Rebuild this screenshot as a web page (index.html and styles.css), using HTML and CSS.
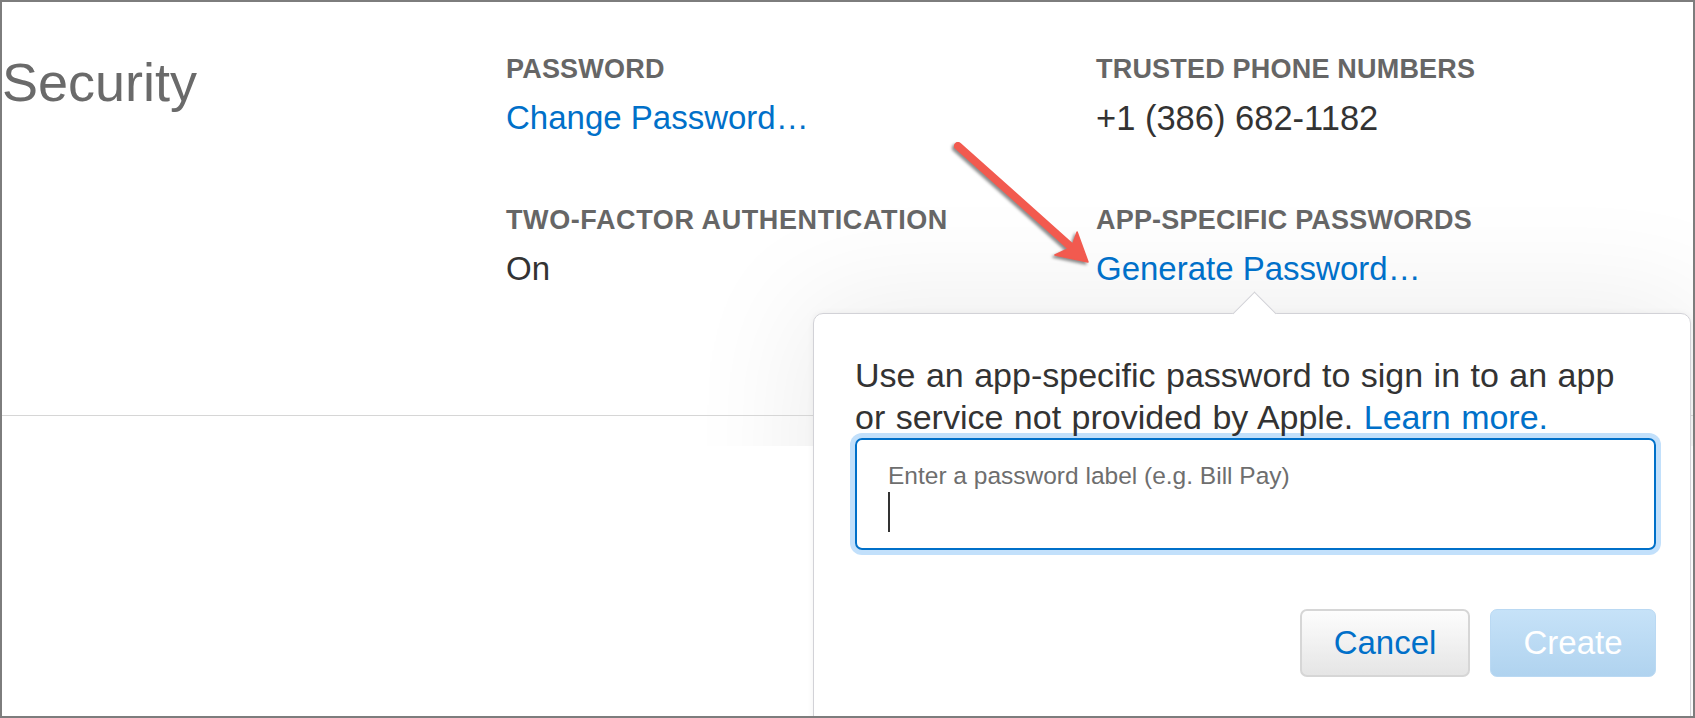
FILE: index.html
```html
<!DOCTYPE html>
<html lang="en">
<head>
<meta charset="utf-8">
<title>Security</title>
<link rel="stylesheet" href="styles.css">
</head>
<body>
<div class="frame">
  <section class="section">
    <div class="shadow-blob"></div>
    <div class="section-inner">
      <h1 class="title">Security</h1>
      <div class="grid">
        <div class="item">
          <div class="label">PASSWORD</div>
          <a class="value link" href="#">Change Password…</a>
        </div>
        <div class="item">
          <div class="label">TRUSTED PHONE NUMBERS</div>
          <div class="value phone">+1 (386) 682-1182</div>
        </div>
        <div class="item">
          <div class="label label-wide">TWO-FACTOR AUTHENTICATION</div>
          <div class="value">On</div>
        </div>
        <div class="item">
          <div class="label">APP-SPECIFIC PASSWORDS</div>
          <a class="value link" href="#">Generate Password…</a>
        </div>
      </div>
    </div>
  </section>

  <div class="popover">
    <div class="popover-caret"></div>
    <p class="popover-text">Use an app-specific password to sign in to an app or service not provided by Apple. <a class="link" href="#">Learn more.</a></p>
    <div class="field">
      <div class="field-label">Enter a password label (e.g. Bill Pay)</div>
      <div class="caret"></div>
    </div>
    <div class="buttons">
      <button class="btn btn-cancel" type="button">Cancel</button>
      <button class="btn btn-create" type="button">Create</button>
    </div>
  </div>

  <svg class="arrow" width="160" height="145" viewBox="0 0 160 145" xmlns="http://www.w3.org/2000/svg">
    <line x1="18" y1="16" x2="133" y2="118.7" stroke="#f25a4f" stroke-width="8" stroke-linecap="round"/>
    <polygon points="148,132 114.9,125 131.6,117.3 137.1,101.9" fill="#f25a4f" stroke="#f25a4f" stroke-width="1.5" stroke-linejoin="round"/>
  </svg>
</div>
</body>
</html>
```

FILE: styles.css
```css
* { box-sizing: border-box; }

html, body {
  margin: 0;
  padding: 0;
  background: #ffffff;
}

body {
  font-family: "Liberation Sans", Arial, Helvetica, sans-serif;
  color: #333333;
}

.frame {
  position: relative;
  width: 1695px;
  height: 718px;
  border: 2px solid #7d7d7d;
  background: #ffffff;
  overflow: hidden;
}

.section {
  position: relative;
  z-index: 0;
  height: 444px;
  overflow: hidden;
}

.shadow-blob {
  position: absolute;
  z-index: -1;
  left: 811px;
  top: 311px;
  width: 878px;
  height: 520px;
  border-radius: 10px;
  box-shadow: 0 0 120px 12px rgba(0, 0, 0, 0.075);
}

.section-inner {
  display: flex;
  height: 414px;
  padding-top: 51px;
  border-bottom: 1px solid #d6d6d6;
}

.title {
  width: 504px;
  margin: 2px 0 0 0;
  font-size: 54px;
  line-height: 54px;
  font-weight: normal;
  color: #6a6a6a;
}

.grid {
  display: grid;
  grid-template-columns: 590px auto;
  row-gap: 66px;
  align-content: start;
}

.item {
  display: flex;
  flex-direction: column;
  align-items: flex-start;
}

.label {
  font-size: 27px;
  line-height: 32px;
  font-weight: bold;
  letter-spacing: 0.2px;
  color: #666666;
  margin-bottom: 13px;
}

.label-wide {
  letter-spacing: 0.6px;
}

.value {
  font-size: 33px;
  line-height: 40px;
  color: #333333;
}

.phone {
  font-size: 34.5px;
}

.link {
  color: #0070c9;
  text-decoration: none;
}

.popover {
  position: absolute;
  left: 811px;
  top: 311px;
  width: 878px;
  height: 520px;
  background: #ffffff;
  border: 1px solid #d2d2d7;
  border-radius: 10px;
  padding: 40px 34px 0 41px;
  box-shadow: 0 0 6px rgba(0, 0, 0, 0.06);
}

.popover-caret {
  position: absolute;
  left: 424.5px;
  top: -16.5px;
  width: 31px;
  height: 31px;
  background: #ffffff;
  border-top: 1px solid #d2d2d7;
  border-left: 1px solid #d2d2d7;
  transform: rotate(45deg);
}

.popover-text {
  position: relative;
  margin: 0;
  width: 775px;
  font-size: 34px;
  line-height: 42px;
  word-spacing: 1px;
  color: #333333;
}

.field {
  height: 112px;
  border: 2px solid #0070c9;
  border-radius: 7px;
  box-shadow: 0 0 0 5px #c2e0fb;
  padding: 21.7px 31px 0 31px;
}

.field-label {
  font-size: 24.5px;
  line-height: 28px;
  color: #6e6e6e;
}

.caret {
  width: 2px;
  height: 40px;
  margin-top: 2px;
  background: #333333;
}

.buttons {
  display: flex;
  justify-content: flex-end;
  gap: 20px;
  margin-top: 59px;
}

.btn {
  height: 68px;
  padding: 0;
  border-radius: 7px;
  font-family: "Liberation Sans", Arial, Helvetica, sans-serif;
  font-size: 33px;
  line-height: 40px;
  cursor: pointer;
}

.btn-cancel {
  width: 170px;
  border: 2px solid #d6d6d6;
  background: linear-gradient(#fdfdfd, #e5e5e5);
  color: #0070c9;
}

.btn-create {
  width: 166px;
  border: 1px solid #bad9f3;
  background: linear-gradient(#c6e2f8, #b0d3ef);
  color: #ffffff;
}

.arrow {
  position: absolute;
  left: 938px;
  top: 128px;
  filter: drop-shadow(-1.5px 2px 1.5px rgba(0, 0, 0, 0.45));
}
```
